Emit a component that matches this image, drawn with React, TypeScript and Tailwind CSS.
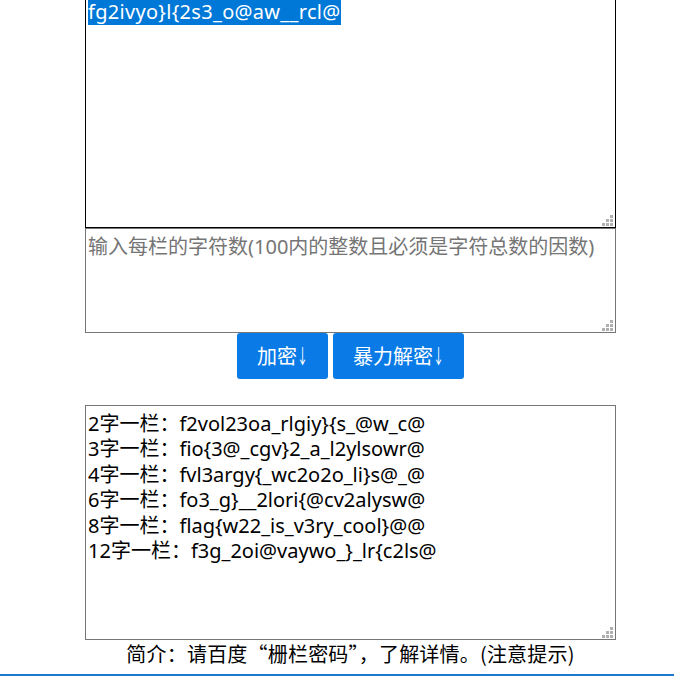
import React from 'react';

const font = "font-['Noto_Sans','Noto_Sans_CJK_SC',sans-serif]";

const Grip: React.FC = () => (
  <svg className="absolute right-[2px] bottom-[1px]" width="11" height="11" viewBox="0 0 11 11">
    <rect x="8" y="0" width="3" height="3" fill="#b0b0b0" />
    <rect x="4" y="4" width="3" height="3" fill="#b0b0b0" />
    <rect x="8" y="4" width="3" height="3" fill="#b0b0b0" />
    <rect x="0" y="8" width="3" height="3" fill="#b0b0b0" />
    <rect x="4" y="8" width="3" height="3" fill="#b0b0b0" />
    <rect x="8" y="8" width="3" height="3" fill="#b0b0b0" />
  </svg>
);

const Arrow: React.FC = () => (
  <span className="inline-block w-[11px] overflow-visible">
    <span className="inline-block scale-x-[0.55] origin-left font-['Noto_Sans_CJK_SC',sans-serif]">↓</span>
  </span>
);

const selected = 'fg2ivyo}l{2s3_o@aw__rcl@';

const results = [
  '2字一栏：f2vol23oa_rlgiy}{s_@w_c@',
  '3字一栏：fio{3@_cgv}2_a_l2ylsowr@',
  '4字一栏：fvl3argy{_wc2o2o_li}s@_@',
  '6字一栏：fo3_g}__2lori{@cv2alysw@',
  '8字一栏：flag{w22_is_v3ry_cool}@@',
  '12字一栏：f3g_2oi@vaywo_}_lr{c2ls@',
];

export default function App() {
  return (
    <div className={`min-h-[676px] w-full bg-white overflow-hidden flex flex-col ${font}`}>
      <div className="ml-[85px] w-[531px] flex flex-col">
        {/* cipher text input, scrolled and selected */}
        <div className="relative -mt-[5px] h-[233px] border border-black px-[2px] pt-[3px] text-[20px] leading-[25.4px] text-black">
          <span className="bg-[#0078d7] text-white tracking-[0.3px]">{selected}</span>
          <Grip />
        </div>

        {/* column size input */}
        <div className="relative h-[105px] border border-[#767676] px-[2px] pt-[5px] text-[20px] leading-[25.4px] text-[#757575] whitespace-nowrap">
          输入每栏的字符数(100内的整数且必须是字符总数的因数)
          <Grip />
        </div>

        <div className="flex justify-center gap-[5px]">
          <button className="h-[46px] px-[20px] rounded-[3px] bg-[#0a7be6] text-white text-[20px]">
            加密<Arrow />
          </button>
          <button className="h-[46px] px-[20px] rounded-[3px] bg-[#0a7be6] text-white text-[20px]">
            暴力解密<Arrow />
          </button>
        </div>

        {/* result output */}
        <div className="relative mt-[26px] h-[235px] border border-[#767676] px-[2px] pt-[5px] text-[20px] leading-[25.4px] text-black">
          {results.map((r) => (
            <div key={r} className="whitespace-nowrap">{r}</div>
          ))}
          <Grip />
        </div>

        <p className="text-center text-[20px] leading-[28px] text-black font-['Noto_Sans_CJK_SC',sans-serif] whitespace-nowrap tracking-[0.2px]">
          简介：请百度“栅栏密码”，了解详情。(注意提示)
        </p>
      </div>
      <div className="mt-auto h-[2px] bg-[#1a78cf]" />
    </div>
  );
}
